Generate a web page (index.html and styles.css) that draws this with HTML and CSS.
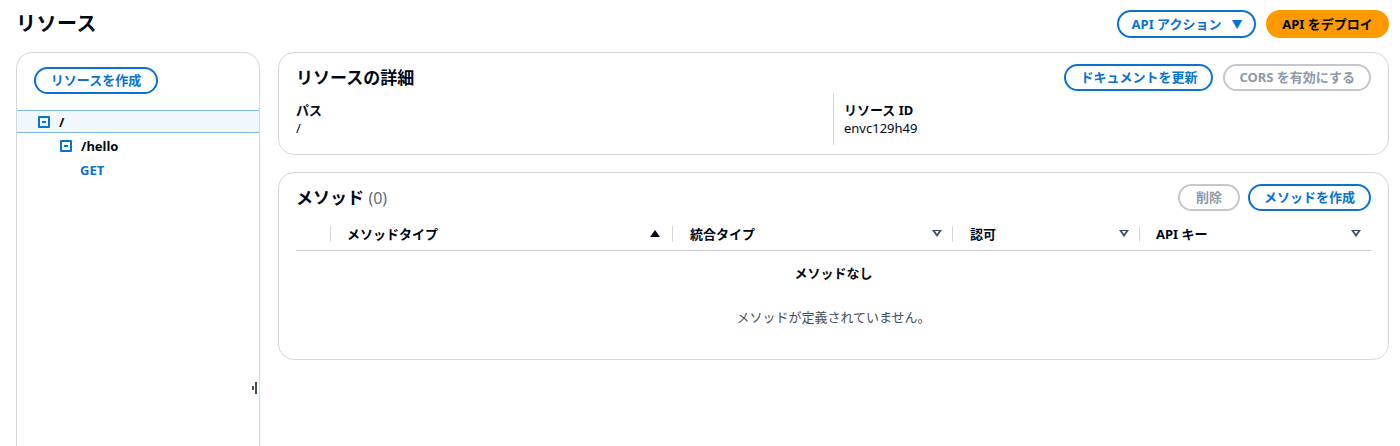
FILE: index.html
```html
<!DOCTYPE html>
<html lang="ja">
<head>
<meta charset="utf-8">
<title>リソース</title>
<link rel="stylesheet" href="styles.css">
</head>
<body>
<div class="page">
  <header class="top">
    <h1 class="title">リソース</h1>
    <div class="top-actions">
      <button class="btn btn-normal btn-top">API アクション <span class="caret">&#9660;</span></button>
      <button class="btn btn-primary btn-top">API をデプロイ</button>
    </div>
  </header>
  <div class="main">
    <aside class="tree-panel">
      <div class="tree-head">
        <button class="btn btn-normal btn-create">リソースを作成</button>
      </div>
      <ul class="tree">
        <li class="tree-row selected lvl0"><span class="tog"></span><span class="tree-label">/</span></li>
        <li class="tree-row lvl1"><span class="tog"></span><span class="tree-label">/hello</span></li>
        <li class="tree-row lvl2"><span class="tree-method">GET</span></li>
      </ul>
      <span class="resizer"><i class="r1"></i><i class="r2"></i></span>
    </aside>
    <section class="content">
      <div class="card details">
        <div class="card-head">
          <h2 class="card-title">リソースの詳細</h2>
          <div class="actions">
            <button class="btn btn-normal">ドキュメントを更新</button>
            <button class="btn btn-disabled">CORS を有効にする</button>
          </div>
        </div>
        <div class="kv">
          <div class="kv-col">
            <div class="kv-key">パス</div>
            <div class="kv-val">/</div>
          </div>
          <div class="kv-col kv-sep">
            <div class="kv-key">リソース ID</div>
            <div class="kv-val">envc129h49</div>
          </div>
        </div>
      </div>
      <div class="card methods">
        <div class="card-head">
          <h2 class="card-title">メソッド <span class="count">(0)</span></h2>
          <div class="actions">
            <button class="btn btn-disabled btn-del">削除</button>
            <button class="btn btn-normal">メソッドを作成</button>
          </div>
        </div>
        <div class="thead">
          <div class="th th-sel"></div>
          <div class="th th-type"><span class="th-label">メソッドタイプ</span><span class="sort sort-up"></span></div>
          <div class="th th-int"><span class="th-label">統合タイプ</span><span class="sort sort-dn"></span></div>
          <div class="th th-auth"><span class="th-label">認可</span><span class="sort sort-dn"></span></div>
          <div class="th th-key"><span class="th-label">API キー</span><span class="sort sort-dn"></span></div>
        </div>
        <div class="empty">
          <div class="empty-title">メソッドなし</div>
          <div class="empty-text">メソッドが定義されていません。</div>
        </div>
      </div>
    </section>
  </div>
</div>
</body>
</html>
```

FILE: styles.css
```css
* { box-sizing: border-box; }
html, body {
  margin: 0;
  padding: 0;
  height: 446px;
  overflow: hidden;
  background: #ffffff;
}
body {
  font-family: "Noto Sans", "Noto Sans CJK JP", sans-serif;
  color: #000716;
  font-size: 13px;
}
.page {
  padding: 10px 11px 0 16px;
}
.top {
  display: flex;
  justify-content: space-between;
  align-items: center;
  height: 28px;
}
.title {
  margin: 0;
  font-size: 20px;
  font-weight: 700;
  line-height: 28px;
  letter-spacing: 0.5px;
}
.top-actions {
  display: flex;
  gap: 10px;
}
.btn {
  font-family: "Noto Sans", "Noto Sans CJK JP", sans-serif;
  font-size: 13px;
  font-weight: 700;
  height: 27px;
  padding: 0 14px;
  border-radius: 20px;
  border: 2px solid #0972d3;
  background: #ffffff;
  color: #0972d3;
  line-height: 23px;
  white-space: nowrap;
  display: inline-flex;
  align-items: center;
  justify-content: center;
}
.btn-top { height: 28px; }
.btn-top.btn-normal { padding: 0 17px 0 18px; width: 139px; }
.btn-create { width: 124px; }
.btn-del { width: 62px; }
.caret {
  font-size: 11px;
  margin-left: 10px;
}
.btn-primary {
  background: #ff9900;
  border-color: #ff9900;
  color: #000716;
  width: 123px;
}
.btn-disabled {
  border-color: #c6c6cd;
  color: #8d99a8;
}
.main {
  display: flex;
  gap: 18px;
  margin-top: 14px;
}
.tree-panel {
  position: relative;
  flex: 0 0 244px;
  height: 410px;
  border: 1px solid #d5d7dc;
  border-radius: 16px;
}
.tree-head {
  padding: 14px 0 0 17px;
}
.tree {
  list-style: none;
  margin: 16px 0 0 0;
  padding: 0;
}
.tree-row {
  display: flex;
  align-items: center;
  height: 24px;
  font-weight: 700;
}
.tree-row.selected {
  height: 23px;
  background: #f0f8fe;
  border-top: 1px solid #7db6e8;
  border-bottom: 1px solid #7db6e8;
}
.lvl0 { padding-left: 21px; }
.lvl1 { padding-left: 43px; margin-top: 1px; }
.lvl2 { padding-left: 63px; }
.tog {
  position: relative;
  width: 12px;
  height: 12px;
  border: 2px solid #0972d3;
  border-radius: 1px;
  margin-right: 9px;
  flex: none;
}
.tog::after {
  content: "";
  position: absolute;
  left: 2px;
  right: 2px;
  top: 3px;
  height: 2px;
  background: #0972d3;
}
.tree-label { line-height: 18px; }
.tree-method { color: #0972d3; }
.resizer {
  position: absolute;
  left: 235px;
  top: 329px;
  display: flex;
  align-items: center;
  gap: 1px;
}
.resizer i {
  display: block;
  width: 2px;
  background: #414d5c;
}
.resizer .r1 { height: 4px; }
.resizer .r2 { height: 12px; }
.content {
  flex: 1;
  display: flex;
  flex-direction: column;
  gap: 17px;
}
.card {
  border: 1px solid #d5d7dc;
  border-radius: 16px;
  padding: 11px 17px 0 17px;
}
.card-head {
  display: flex;
  justify-content: space-between;
  align-items: center;
  height: 27px;
}
.card-title {
  margin: 0;
  font-size: 17px;
  font-weight: 700;
  line-height: 24px;
}
.count {
  font-weight: 400;
  color: #5f6b7a;
  font-size: 16px;
}
.actions {
  display: flex;
  gap: 10px;
}
.methods .actions { gap: 8px; }
.details { padding-bottom: 9px; }
.kv {
  display: grid;
  grid-template-columns: 537px 1fr;
  margin-top: 2px;
}
.kv-col {
  padding: 8px 0;
}
.kv-sep {
  border-left: 1px solid #d5d7dc;
  padding-left: 10px;
}
.kv-key {
  font-weight: 700;
  line-height: 18px;
}
.kv-val {
  line-height: 18px;
}
.thead {
  display: flex;
  margin-top: 6px;
  height: 34px;
  border-bottom: 1px solid #c6c6cd;
}
.th {
  display: flex;
  align-items: center;
  font-weight: 700;
  position: relative;
}
.th::before {
  content: "";
  position: absolute;
  left: 0;
  top: 9px;
  height: 16px;
  width: 1px;
  background: #d5d7dc;
}
.th-sel::before { display: none; }
.th-sel { width: 34px; }
.th-type { width: 342px; }
.th-int { width: 280px; }
.th-auth { width: 187px; }
.th-key { flex: 1; }
.th-label {
  flex: 1;
  padding-left: 17px;
}
.th-int .th-label, .th-auth .th-label { padding-left: 18px; }
.sort {
  width: 0;
  height: 0;
  border-left: 5px solid transparent;
  border-right: 5px solid transparent;
}
.sort-up {
  border-bottom: 7px solid #000716;
  margin-right: 12px;
}
.sort-dn {
  position: relative;
  border-top: 7px solid #414d5c;
  margin-right: 10px;
}
.sort-dn::after {
  content: "";
  position: absolute;
  left: -2px;
  top: -6px;
  border-left: 2px solid transparent;
  border-right: 2px solid transparent;
  border-top: 3px solid #ffffff;
}
.empty {
  text-align: center;
  padding: 13px 0 33px 0;
}
.empty-title {
  font-weight: 700;
  line-height: 18px;
}
.empty-text {
  margin-top: 26px;
  line-height: 18px;
  color: #414d5c;
}
```
